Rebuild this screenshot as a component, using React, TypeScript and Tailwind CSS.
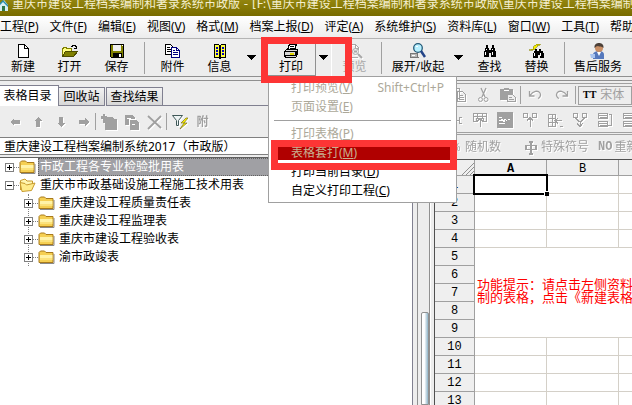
import type { ReactNode } from "react";

const menus = [
  ["工程", "P"],
  ["文件", "F"],
  ["编辑", "E"],
  ["视图", "V"],
  ["格式", "M"],
  ["档案上报", "D"],
  ["评定", "A"],
  ["系统维护", "S"],
  ["资料库", "L"],
  ["窗口", "W"],
  ["工具", "T"],
  ["帮助", "H"],
];

const folders = ["重庆建设工程质量责任表", "重庆建设工程监理表", "重庆市建设工程验收表", "渝市政竣表"];

function Icon({ children, size = 16, className = "" }: { children: ReactNode; size?: number; className?: string }) {
  return (
    <svg
      width={size}
      height={size}
      viewBox="0 0 16 16"
      fill="none"
      stroke="currentColor"
      className={`shrink-0 ${className}`}
      shapeRendering="crispEdges"
      aria-hidden="true"
    >
      {children}
    </svg>
  );
}

const NewIcon = () => (
  <Icon>
    <path d="M3.500 1.500h6l4 4v9h-10z" fill="#fff" stroke="#000" />
    <path d="M9.500 1.500v4h4" stroke="#000" />
  </Icon>
);

const OpenIcon = () => (
  <Icon>
    <path d="M0.500 13.500v-8h1v-1h3v1h5v3" fill="#ffff80" stroke="#808000" />
    <path d="M0.500 13.500l3-5h12l-4 5z" fill="#808000" stroke="#4c4c00" />
    <path d="M9 3.500h1v-1h3v1h1v2M12 5.500h3M14.500 3v3" stroke="#000" />
  </Icon>
);

const SaveIcon = () => (
  <Icon>
    <path d="M1.500 1.500h13v13h-12l-1-1z" fill="#808000" stroke="#000" />
    <path d="M4 2h8v6H4z" fill="#efefef" stroke="none" />
    <path d="M4 10h9v5H4z" fill="#000" stroke="none" />
    <path d="M10 11h2v3h-2zM13 2h1v1h-1z" fill="#fff" stroke="none" />
  </Icon>
);

const AttachIcon = () => (
  <Icon>
    <path d="M0.500 1.500h5l3 3v7h-8z" fill="#fff" stroke="#000" />
    <path d="M2 4.500h3M2 6.500h4M2 8.500h4" stroke="#000" />
    <path d="M6.500 4.500h5l3 3v7h-8z" fill="#fff" stroke="#000080" />
    <path d="M11.500 5v2.500h3M8 7.500h2M8 9.500h5M8 11.500h5" stroke="#000080" />
  </Icon>
);

const InfoIcon = () => (
  <Icon>
    <path d="M2.500 1.500h4l1.500 1 1.500-1h4v13h-4l-1.500 1-1.500-1h-4z" fill="#ffff40" stroke="#000" />
    <path d="M8 2v13" stroke="#000" strokeWidth="2" />
    <path d="M4 4.500h2M4 7.500h2M4 10.500h2M10 4.500h2M10 7.500h2M10 10.500h2" stroke="#0000c0" strokeWidth="2" />
  </Icon>
);

const PrintIcon = () => (
  <Icon>
    <path d="M4.500 7l2-6h7l-2 6z" fill="#fff" stroke="#000" />
    <path d="M7 3.500h4M6.500 5.500h4" stroke="#000" />
    <path d="M1.500 8.500l2-2h11v5l-2 3h-10l-1-2z" fill="#d8d8d8" stroke="#000" />
    <path d="M2 8.500h10v4M2 12.500h10" stroke="#000" />
    <path d="M7 10h3v1H7z" fill="#e6d800" stroke="#e6d800" />
    <path d="M13 8v5" stroke="#000" />
  </Icon>
);

const PreviewIcon = () => (
  <Icon className="drop-shadow-[1px_1px_0_white]">
    <path d="M2.500 14.500v-13h6l3 3v2M8.500 2v3h3M3 14.500h8" />
    <circle cx="8.500" cy="8.500" r="3" fill="#eee" shapeRendering="auto" />
    <path d="M11 11l4 4M7 8.500h3" strokeWidth="2" shapeRendering="auto" />
  </Icon>
);

const ExpandIcon = () => (
  <Icon>
    <path d="M1 10h6l1 4H0z" fill="#b8b8b8" stroke="#777" />
    <path d="M2 12h3" stroke="#fff" />
    <circle cx="8" cy="5" r="4.300" fill="#b8f0ff" stroke="#235a78" strokeWidth="1.300" shapeRendering="auto" />
    <path d="M6 4l2-1" stroke="#fff" />
    <path d="M11 8l4 6" stroke="#234488" strokeWidth="2.500" shapeRendering="auto" />
  </Icon>
);

const FindIcon = () => (
  <Icon>
    <path d="M4 2h2v3h1v2h2V5h1V2h2v3h1v3h1v6h-5v-4H7v4H2V8h1V5h1z" fill="#000" stroke="none" />
    <path d="M4.500 6v1M3.500 9v3M10.500 6v1M10.500 9v3" stroke="#fff" />
  </Icon>
);

const ReplaceIcon = () => (
  <Icon>
    <path d="M6 6h2v2h2V6h2v2h2v2h1v5h-4v-3H9v3H4v-5h1V8h1z" fill="#000" stroke="none" />
    <path d="M5.500 10v3M11.500 10v3" stroke="#fff" />
    <path d="M0 7l4-1V4l4-3h3v1h-2l-2 3-3 2z" fill="#f5ee00" stroke="#8a8600" strokeWidth="0.600" />
  </Icon>
);

const ServiceIcon = () => (
  <Icon>
    <g stroke="none" shapeRendering="auto">
      <path d="M3 16v-4c0-3 3-4 6-4s5 1 5 4v4z" fill="#5578bd" />
      <path d="M7 9l2 4 2-4z" fill="#fff" />
      <circle cx="9" cy="5" r="4" fill="#c98f66" />
      <path d="M4.500 5C4 1 7 0 9 0s5 1 4.500 5C12 3 9 4 7 3z" fill="#4c4038" />
      <path d="M0 11h5v4H1z" fill="#a9c4ef" />
    </g>
  </Icon>
);

function Arrow({ rotate }: { rotate: string }) {
  return (
    <Icon className={rotate}>
      <path d="M3 8l4-4v2h6v4H7v2z" fill="currentColor" stroke="none" />
    </Icon>
  );
}

function Folder({ open = false }: { open?: boolean }) {
  return (
    <svg width="17" height="16" viewBox="0 0 17 16" className="mr-[2px] shrink-0" aria-hidden="true">
      {open ? (
        <>
          <path d="M1.500 13V3.500L6 2l2 2h5.500v3" fill="#fff6b0" stroke="#c79a2e" />
          <path d="M3 14.500L1 5.500l5 1 1.500 1.500 8.500-2-3.500 7.500z" fill="#ffec8b" stroke="#c79a2e" />
        </>
      ) : (
        <>
          <path d="M2 14.500h14V5" fill="none" stroke="#8a8a8a" />
          <path d="M1 13.500v-10L2.500 2h4L8 3.500h7v10z" fill="#f5cf52" stroke="#a87a1c" />
          <path d="M2 6h12.500v3H2z" fill="#fff3a8" />
          <path d="M2 9h12.500v2H2z" fill="#fbe27c" />
        </>
      )}
    </svg>
  );
}

function Expander({ open = false }: { open?: boolean }) {
  return (
    <button
      aria-label={open ? "收起" : "展开"}
      className="flex h-[9px] w-[9px] shrink-0 items-center justify-center border border-[#808080] bg-white"
    >
      <svg width="5" height="5" stroke="#000" aria-hidden="true">
        <path d={open ? "M0 2.500h5" : "M0 2.500h5M2.500 0v5"} shapeRendering="crispEdges" />
      </svg>
    </button>
  );
}

function ToolButton({ icon, label, className = "w-[47px]" }: { icon: ReactNode; label: string; className?: string }) {
  return (
    <button className={`flex h-full shrink-0 flex-col items-center whitespace-nowrap pt-1 leading-[15px] ${className}`}>
      {icon}
      <span>{label}</span>
    </button>
  );
}

function DropButton({ className = "" }: { className?: string }) {
  return (
    <button aria-label="更多" className={`flex h-full w-4 shrink-0 items-center justify-center ${className}`}>
      <svg width="9" height="5" shapeRendering="crispEdges" aria-hidden="true">
        <path d="M0 0h9L4.500 5z" fill="#000" />
      </svg>
    </button>
  );
}

function Sep({ className = "mx-1 h-8" }: { className?: string }) {
  return <div className={`w-px shrink-0 bg-[#a0a0a0] ${className}`} />;
}

function MenuItem({ label, hotkey, disabled = false, shortcut }: { label: string; hotkey: string; disabled?: boolean; shortcut?: string }) {
  return (
    <button
      disabled={disabled}
      className="flex h-[19px] w-full items-center justify-between pl-[22px] pr-3 disabled:text-[#aca899]"
    >
      <span>
        {label}(<u>{hotkey}</u>)
      </span>
      {shortcut && <span>{shortcut}</span>}
    </button>
  );
}

function PrintMenu() {
  return (
    <div className="absolute left-[268px] top-[76px] z-10 flex w-[189px] flex-col border border-[#a0a0a0] bg-white pb-[2px] pt-px">
      <MenuItem label="打印预览" hotkey="V" shortcut="Shift+Ctrl+P" disabled />
      <MenuItem label="页面设置" hotkey="E" disabled />
      <div className="mx-[5px] mb-[3px] mt-1 h-px bg-[#a0a0a0]" />
      <MenuItem label="打印表格" hotkey="P" disabled />
      <button className="ml-[9px] mr-[6px] mt-[2px] flex h-[16px] items-center border-b border-white bg-[#b00000] pl-[13px] text-[#c8b090]">
        表格套打(<u>M</u>)
      </button>
      <div className="mt-px">
        <MenuItem label="打印当前目录" hotkey="D" />
        <MenuItem label="自定义打印工程" hotkey="C" />
      </div>
    </div>
  );
}

function LeftPanel() {
  return (
    <section className="flex w-[413px] shrink-0 flex-col border-r border-[#808090]">
      <div className="flex h-[25px] shrink-0 items-end pt-1" role="tablist">
        <button role="tab" aria-selected="true" className="h-[21px] w-[59px] border-r border-t border-[#808090] bg-white pr-[3px]">
          表格目录
        </button>
        <button role="tab" className="h-[19px] w-[46px] border border-l-0 border-[#808090] bg-linear-to-b from-[#f2f2f2] to-[#d8d8d8]">
          回收站
        </button>
        <button role="tab" className="ml-px h-[19px] w-[57px] border border-[#808090] bg-linear-to-b from-[#f2f2f2] to-[#d8d8d8]">
          查找结果
        </button>
        <div className="h-px flex-1 bg-[#808090]" />
      </div>

      <div className="flex h-[31px] shrink-0 items-center pl-[3px] text-[#a0a0a0] [&>button]:flex [&>button]:w-[23px] [&>button]:justify-center [&>button]:drop-shadow-[1px_1px_0_white]">
        <button aria-label="左移"><Arrow rotate="" /></button>
        <button aria-label="上移"><Arrow rotate="rotate-90" /></button>
        <button aria-label="下移"><Arrow rotate="-rotate-90" /></button>
        <button aria-label="右移"><Arrow rotate="rotate-180" /></button>
        <Sep className="mr-px h-[17px]" />
        <button aria-label="新增">
          <Icon>
            <path d="M2 0h2v2h2v1h6l1 2h3v11H4V9H2V5H0V2h2z" fill="currentColor" stroke="none" />
          </Icon>
        </button>
        <button aria-label="复制">
          <Icon>
            <path d="M1 1h7l3 3v7H1z M6 6h6l3 3v7H6z" fill="currentColor" stroke="none" />
            <path d="M3 4.500h4M5.500 11V5.500h5M8 10.500h3" stroke="#fff" />
          </Icon>
        </button>
        <button aria-label="删除">
          <Icon>
            <path d="M1 2l13 12M14 2L1 15" strokeWidth="1.800" shapeRendering="auto" />
          </Icon>
        </button>
        <Sep className="mr-px h-[17px]" />
        <button aria-label="过滤">
          <Icon>
            <path d="M0.500 1.500h10l-4 5v5h-2v-5z" fill="#eef4f4" stroke="#405858" shapeRendering="auto" />
            <path d="M14 4l-5 5h3l-4 6 7-6h-3l4-5z" fill="#fff000" stroke="#77701c" strokeWidth="0.700" shapeRendering="auto" />
          </Icon>
        </button>
        <button className="font-bold">附</button>
      </div>

      <input
        readOnly
        aria-label="工程名称"
        value="重庆建设工程档案编制系统2017（市政版）"
        className="mb-[2px] h-[18px] w-full shrink-0 border border-l-0 border-[#808080] bg-white pl-1 outline-none"
      />

      <ul className="flex-1 border-t border-[#606060] bg-white">
        <li className="flex h-[18px] items-center pl-[5px]">
          <Expander />
          <span className="w-[5px] border-t border-dotted border-[#808080]" />
          <Folder />
          <span className="h-full flex-1 border border-dotted border-[#606060] bg-[#a0a0a4] pl-px leading-[16px] text-white">
            市政工程各专业检验批用表
          </span>
        </li>
        <li>
          <div className="flex h-[18px] items-center pl-[5px]">
            <Expander open />
            <span className="w-[5px] border-t border-dotted border-[#808080]" />
            <Folder open />
            <span className="pl-[2px]">重庆市市政基础设施工程施工技术用表</span>
          </div>
          <ul className="ml-7 border-l border-dotted border-[#808080]">
            {folders.map((f) => (
              <li key={f} className="-ml-[5px] flex h-[18px] items-center">
                <Expander />
                <span className="w-[5px] border-t border-dotted border-[#808080]" />
                <Folder />
                <span className="pl-[2px]">{f}</span>
              </li>
            ))}
          </ul>
        </li>
      </ul>
    </section>
  );
}

// greyed-out cell editing icons of the second tool strip
const cellIcons = [
  { name: "拆分", d: "M1 3.500h6v9H1M7 8.500h5M12 5v7M12 5.500h3M12 11.500h3" },
  { name: "插入列", d: "M1.500 1.500h13v8h-3v-3h-7v3h-3zM1 4.500h14M5.500 1v5M10.500 1v5M8 6v9M5 9.500l3-3 3 3" },
  { name: "图片", d: "" },
  { name: "合并上", d: "M1.500 1.500h4v4h-4zM10.500 1.500h4v4h-4zM6 7.500h4M8.500 5v10M5 8.500l3-3 3 3" },
  { name: "合并左", d: "M1.500 2.500h7v12h-7zM1 6.500h8M1 10.500h8M5.500 2v12M9 8.500h6M11 6l-3 2.500 3 3M13 14.500h3" },
  { name: "合并下", d: "M1.500 1.500h4v4h-4zM10.500 1.500h4v4h-4zM3.500 6l4 4M12.500 6l-4 4M8 9v5M5 11l3 4 3-4" },
  { name: "行高", d: "M1.500 1.500h9v5h-9zM1.500 9.500h9v5h-9zM2 3.500h8M3 5.500h7M2 11.500h8M3 13.500h7M12 2.500h2v11h-3" },
  { name: "列宽", d: "M1.500 1.500h13v5h-13zM1.500 9.500h13v5h-13zM2 3.500h12M3 5.500h11M2 11.500h12M3 13.500h11" },
];

function SheetTools() {
  return (
    <div className="shrink-0 text-[#a0a0a0] [&_button]:shrink-0 [&_button]:drop-shadow-[1px_1px_0_white]">
      <div className="mt-[2px] flex h-6 items-center border-y border-[#a0a0a0] pl-[14px]">
        <button aria-label="复制" className="flex w-6 justify-center">
          <Icon>
            <path d="M1.500 1.500h6v10h-6zM5.500 4.500h5l3 3v7h-8zM7 8.500h4M7 10.500h5M7 12.500h5" />
          </Icon>
        </button>
        <button aria-label="剪切" className="flex w-6 justify-center">
          <Icon>
            <path d="M5 1l4 9M10 1L6 10" strokeWidth="1.300" shapeRendering="auto" />
            <circle cx="4.500" cy="12.500" r="2" shapeRendering="auto" />
            <circle cx="10" cy="12.500" r="2" shapeRendering="auto" />
          </Icon>
        </button>
        <button aria-label="粘贴" className="flex w-6 justify-center">
          <Icon>
            <path d="M0 2h4V1h5v1h4v11H0z" fill="currentColor" stroke="none" />
            <path d="M4 3.500h5" stroke="#fff" />
            <path d="M7.500 7.500h5l3 3v4h-8z" fill="#eee" />
            <path d="M9 10.500h3M9 12.500h5" />
          </Icon>
        </button>
        <Sep className="h-[18px]" />
        <button aria-label="撤销" className="flex w-[27px] justify-center">
          <Icon>
            <path d="M2.500 4v5h5M3 8.500C6 4 11 3 13 6c1.500 2.500-.5 5-2 5.500" strokeWidth="1.300" shapeRendering="auto" />
          </Icon>
        </button>
        <button aria-label="重做" className="flex w-[27px] justify-center">
          <Icon>
            <path d="M13.500 4v5h-5M13 8.500C10 4 5 3 3 6c-1.500 2.500.5 5 2 5.500" strokeWidth="1.300" shapeRendering="auto" />
          </Icon>
        </button>
        <Sep className="mr-[2px] h-[18px]" />
        <label className="flex h-[19px] min-w-0 flex-1 items-center border border-[#a0a0a0] pl-1">
          <span className="mr-1 shrink-0 font-['Liberation_Serif'] text-[10px] font-bold text-black">TT</span>
          <select aria-label="字体" disabled className="min-w-0 flex-1 appearance-none bg-transparent">
            <option>宋体</option>
          </select>
        </label>
      </div>
      <div className="mt-px flex h-[25px] items-center overflow-hidden border-b border-[#a0a0a0] pl-2">
        {cellIcons.map((c) => (
          <button key={c.name} aria-label={c.name} className="flex w-[25px] justify-center">
            <Icon>
              {c.d ? (
                <path d={c.d} />
              ) : (
                <>
                  <path d="M0 0h16v16H0z" fill="currentColor" stroke="none" />
                  <path d="M2 5.500h3M2 8.500h2l1-1 2 2 1-2 2 1M2 11.500h6M11 7.500h2" stroke="#fff" />
                </>
              )}
            </Icon>
          </button>
        ))}
      </div>
      <div className="mt-px flex h-[25px] items-center overflow-hidden whitespace-nowrap border-t border-[#a0a0a0] pl-[18px]">
        <button className="flex items-center">
          <span className="mr-1 w-[9px] text-[10px]">%</span>
          随机数
        </button>
        <button className="ml-[22px] flex items-center">
          <Icon className="mr-[2px]">
            <path d="M8 2v13M6 2.500h4M6 14.500h4" strokeWidth="2" />
            <path d="M3 6.500h10v4H3z" strokeWidth="1.500" />
          </Icon>
          特殊符号
        </button>
        <button className="ml-[9px] flex items-center">
          <span className="mr-[2px] font-['Liberation_Mono'] text-[12px] font-bold">NO</span>
          重新编号
        </button>
      </div>
    </div>
  );
}

const headCell = "h-[18px] border-b border-r border-[#a0a0a0] bg-[#efefef] p-0 font-normal leading-[16px]";
const colHead = "h-4 border-b border-r border-[#a0a0a0] p-0 pt-[3px] leading-[12px]";
const cell = "border-b border-r border-[#d4d0c8] p-0";

function Sheet() {
  return (
    <div className="flex-1 overflow-hidden border-l border-t border-[#505050] bg-white">
      <table className="w-[256px] table-fixed border-separate border-spacing-0 font-['Liberation_Mono','Noto_Sans_CJK_SC',monospace]">
        <colgroup>
          <col className="w-10" />
          <col className="w-[72px]" />
          <col className="w-[72px]" />
          <col className="w-[72px]" />
        </colgroup>
        <thead>
          <tr className="h-4 bg-[#efefef]">
            <th className={colHead}>
              <svg width="12" height="12" className="ml-auto" stroke="#909090" aria-hidden="true">
                <path d="M0 12L12 0M4 12l8-8M8 12l4-4" />
              </svg>
            </th>
            <th className={colHead}>A</th>
            <th className={`${colHead} font-normal`}>B</th>
            <th className={`${colHead} font-normal`}>C</th>
          </tr>
        </thead>
        <tbody>
          {Array.from({ length: 13 }, (_, i) => i + 1).map((row) => (
            <tr key={row} className="h-[18px]">
              <th className={headCell}>{row}</th>
              {row === 5 && (
                <td colSpan={3} rowSpan={5} className="overflow-hidden border-b border-[#d4d0c8] p-0 pb-[6px] pl-[2px]">
                  <p className="whitespace-nowrap font-['Noto_Sans_CJK_SC',sans-serif] text-[13px] leading-[13px] text-[#ff0000]">
                    功能提示：请点击左侧资料
                    <br />
                    制的表格，点击《新建表格
                  </p>
                </td>
              )}
              {(row < 5 || row > 9) && (
                <>
                  <td className={cell}>
                    {row === 1 && (
                      <div className="relative h-[17px] outline-2 outline-black">
                        <span className="absolute -bottom-[3px] -right-[3px] h-[5px] w-[5px] border-l border-t border-white bg-black" />
                      </div>
                    )}
                  </td>
                  <td className={cell} />
                  <td className={cell} />
                </>
              )}
            </tr>
          ))}
        </tbody>
      </table>
    </div>
  );
}

export default function App() {
  return (
    <div className="relative flex h-screen flex-col overflow-hidden bg-[#ededed] font-['Noto_Sans','Noto_Sans_CJK_SC',sans-serif] text-[12px] leading-[16px] text-black">
      <header className="flex h-4 shrink-0 items-start overflow-hidden whitespace-nowrap bg-linear-to-b from-[#93850f] via-[#857805] to-[#776b00] text-[#f4efcf]">
        <svg width="10" height="12" viewBox="0 0 10 12" className="mr-[2px] shrink-0" aria-hidden="true">
          <path d="M0 4l4-4 4 5v6H0z" fill="#d8f0f4" />
          <path d="M0 3l3-3 5 5v2L3 2 0 5z" fill="#2b8fae" />
          <path d="M2 6h3v5H2z" fill="#307848" />
        </svg>
        <h1 className="-mt-1 font-['DejaVu_Sans','Noto_Sans_CJK_SC',sans-serif]">
          重庆市建设工程档案编制和著录系统市政版 - [F:\重庆市建设工程档案编制和著录系统市政版\重庆市建设工程档案编制
        </h1>
      </header>

      <nav className="flex h-[23px] shrink-0 items-center gap-[11px] overflow-hidden whitespace-nowrap border-b border-[#b4b4b4] bg-linear-to-b from-white to-[#ececec]">
        {menus.map(([label, key]) => (
          <button key={key} className="shrink-0">
            {label}(<u>{key}</u>)
          </button>
        ))}
      </nav>

      <div className="flex h-[38px] shrink-0 items-center overflow-hidden border-b border-[#909090]">
        <ToolButton icon={<NewIcon />} label="新建" className="w-[46px]" />
        <ToolButton icon={<OpenIcon />} label="打开" />
        <ToolButton icon={<SaveIcon />} label="保存" />
        <Sep />
        <ToolButton icon={<AttachIcon />} label="附件" />
        <ToolButton icon={<InfoIcon />} label="信息" />
        <DropButton className="mr-2" />
        <ToolButton icon={<PrintIcon />} label="打印" className="w-[49px] border-b border-r border-[#909090]" />
        <DropButton className="border-r border-white" />
        <ToolButton icon={<PreviewIcon />} label="预览" className="w-[45px] text-[#a8a8a8]" />
        <Sep />
        <ToolButton icon={<ExpandIcon />} label="展开/收起" className="w-[64px]" />
        <DropButton />
        <ToolButton icon={<FindIcon />} label="查找" />
        <ToolButton icon={<ReplaceIcon />} label="替换" />
        <Sep />
        <ToolButton icon={<ServiceIcon />} label="售后服务" className="w-[58px]" />
      </div>
      <div className="mt-[3px] h-px shrink-0 bg-[#909090]" />

      <main className="flex min-h-0 flex-1">
        <LeftPanel />
        <div className="flex w-[21px] shrink-0 flex-col pl-1 pr-1">
          <div className="flex flex-1 flex-col border-x border-[#909090] bg-[#ededed] pl-[3px] shadow-[1px_0_0_white]">
            <div className="mt-[231px] flex-1 rounded-t-[2px] border border-[#909090] bg-linear-to-r from-white from-40% to-[#8fb4c8]" />
          </div>
        </div>
        <section className="flex min-w-0 flex-1 flex-col">
          <SheetTools />
          <Sheet />
        </section>
      </main>

      <PrintMenu />
      <div className="pointer-events-none absolute left-[261px] top-[37px] z-20 h-[46px] w-[91px] border-[7px] border-[#fd3535]" />
      <div className="pointer-events-none absolute left-[271px] top-[140px] z-20 h-[30px] w-[186px] border-[7px] border-[#fd3535]" />
    </div>
  );
}
